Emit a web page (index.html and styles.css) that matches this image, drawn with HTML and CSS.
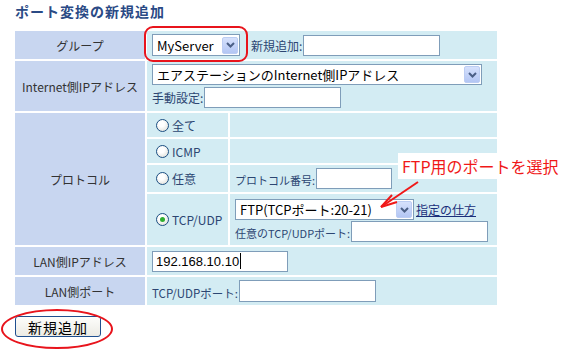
FILE: index.html
```html
<!DOCTYPE html>
<html lang="ja">
<head>
  <meta charset="UTF-8" />
  <title>ポート変換の新規追加</title>
  <link rel="stylesheet" href="styles.css">
</head>
<body>

<div class="page">
  <h1 class="title">ポート変換の新規追加</h1>

  <div class="form">
    <div class="label">グループ</div>
    <div class="cell wide">
      <div class="select sel-group">
        <span class="sel-text">MyServer</span>
        <span class="sel-btn"><svg width="9" height="6" viewBox="0 0 9 6"><path d="M1 1l3.5 3.5L8 1" fill="none" stroke="#4b5f86" stroke-width="2"/></svg></span>
      </div>
      <span class="hint gap-left">新規追加:</span>
      <input class="field w137" type="text">
    </div>

    <div class="label">Internet側IPアドレス</div>
    <div class="cell wide stack">
      <div class="select sel-wan">
        <span class="sel-text">エアステーションのInternet側IPアドレス</span>
        <span class="sel-btn"><svg width="9" height="6" viewBox="0 0 9 6"><path d="M1 1l3.5 3.5L8 1" fill="none" stroke="#4b5f86" stroke-width="2"/></svg></span>
      </div>
      <div class="line">
        <span class="hint">手動設定:</span>
        <input class="field w137" type="text">
      </div>
    </div>

    <div class="label proto">プロトコル</div>
    <div class="cell radio-cell"><span class="radio"></span><span class="opt">全て</span></div>
    <div class="cell"></div>
    <div class="cell radio-cell"><span class="radio"></span><span class="opt">ICMP</span></div>
    <div class="cell"></div>
    <div class="cell radio-cell"><span class="radio"></span><span class="opt">任意</span></div>
    <div class="cell sub">
      <span class="hint low small">プロトコル番号:</span>
      <input class="field w76" type="text">
    </div>
    <div class="cell radio-cell"><span class="radio checked"></span><span class="opt">TCP/UDP</span></div>
    <div class="cell sub stack">
      <div class="line">
        <div class="select sel-ftp">
          <span class="sel-text">FTP(TCPポート:20-21)</span>
          <span class="sel-btn"><svg width="9" height="6" viewBox="0 0 9 6"><path d="M1 1l3.5 3.5L8 1" fill="none" stroke="#4b5f86" stroke-width="2"/></svg></span>
        </div>
        <a class="howto" href="#">指定の仕方</a>
      </div>
      <div class="line">
        <span class="hint low small">任意のTCP/UDPポート:</span>
        <input class="field w137" type="text">
      </div>
    </div>

    <div class="label">LAN側IPアドレス</div>
    <div class="cell wide">
      <div class="field w136 ip">192.168.10.10<span class="caret"></span></div>
    </div>

    <div class="label">LAN側ポート</div>
    <div class="cell wide">
      <span class="hint low mid">TCP/UDPポート:</span>
      <input class="field w137 tall" type="text">
    </div>
  </div>

  <button class="add-btn">新規追加</button>

  <!-- annotations -->
  <div class="mark-box"></div>
  <div class="mark-ellipse"></div>
  <div class="note">FTP用のポートを選択</div>
  <svg class="arrow" width="60" height="40" viewBox="0 0 60 40">
    <path d="M48 2L11 27" stroke="#f01818" stroke-width="2" fill="none"/>
    <path d="M11 27L22 15M11 27L27 22" stroke="#f01818" stroke-width="2" fill="none"/>
  </svg>
</div>

</body>
</html>
```

FILE: styles.css
```css
* {
  box-sizing: border-box;
}

body {
  margin: 0;
  background: #fff;
  font-family: "Noto Sans CJK JP", "Liberation Sans", sans-serif;
  color: #333;
}

.page {
  position: relative;
  width: 570px;
  height: 350px;
  overflow: hidden;
}

.title {
  margin: 0;
  padding: 3px 0 0 15px;
  height: 31px;
  font-size: 14px;
  line-height: 16px;
  font-weight: bold;
  letter-spacing: 1px;
  color: #2a4a85;
}

.form {
  display: grid;
  grid-template-columns: 130px 81px 267px;
  grid-template-rows: 28px 50px 24px 24px 27px 51px 28px 28px;
  gap: 2px;
  margin-left: 15px;
}

.label {
  grid-column: 1;
  display: flex;
  align-items: center;
  justify-content: center;
  background: #c8d6f0;
  font-size: 12px;
  color: #333;
}

.label.proto {
  grid-row: 3 / span 4;
}

.cell {
  display: flex;
  align-items: center;
  background: #d3ecf3;
  padding-left: 5px;
}

.wide {
  grid-column: 2 / span 2;
}

.stack {
  flex-direction: column;
  align-items: flex-start;
  justify-content: center;
  gap: 2px;
}

.line {
  display: flex;
  align-items: center;
}

.hint {
  font-size: 12px;
  color: #2c4672;
  margin-right: 1px;
  white-space: nowrap;
}

.hint.small {
  font-size: 11px;
}

.hint.mid {
  font-size: 11.5px;
}

.hint.low {
  align-self: flex-end;
  margin-bottom: 4px;
}

.line .hint.low {
  align-self: auto;
  margin: 3px 1px 0 0;
}

.gap-left {
  margin-left: 11px;
}

.field {
  height: 21px;
  border: 1px solid #7f9db9;
  background: #fff;
  padding: 0 3px;
  font: 13px "Liberation Sans", sans-serif;
}

.w137 { width: 137px; }
.w136 { width: 136px; }
.w76 { width: 76px; }
.tall { height: 22px; }

.ip {
  display: flex;
  align-items: center;
  color: #000;
}

.caret {
  width: 1px;
  height: 16px;
  background: #000;
  margin-left: 1px;
}

.select {
  display: flex;
  align-items: center;
  height: 21px;
  border: 1px solid #7f9db9;
  background: #fff;
  padding-left: 4px;
  font-size: 13px;
  color: #000;
  white-space: nowrap;
  overflow: hidden;
}

.sel-text {
  flex: 1;
  overflow: hidden;
  line-height: 19px;
}

.sel-btn {
  display: flex;
  align-items: center;
  justify-content: center;
  width: 16px;
  height: 17px;
  margin-right: 1px;
  border: 1px solid #bccdf3;
  border-radius: 2px;
  background: linear-gradient(#d6e1fc, #b3c6f4);
}

.sel-group {
  width: 88px;
  height: 22px;
}

.sel-wan {
  width: 330px;
}

.sel-ftp {
  width: 179px;
}

.sub {
  padding-left: 5px;
}

.sub.stack {
  gap: 1px;
  padding-top: 2px;
}

.howto {
  margin-left: 2px;
  font-size: 12px;
  color: #1a2f7a;
  text-decoration: underline;
}

.radio-cell {
  grid-column: 2;
  padding-left: 9px;
}

.radio {
  width: 13px;
  height: 13px;
  border-radius: 50%;
  border: 1px solid #1c4f82;
  background: radial-gradient(circle at 40% 35%, #fff 30%, #d8d8d0 100%);
  position: relative;
}

.radio.checked::after {
  content: "";
  position: absolute;
  left: 3px;
  top: 3px;
  width: 5px;
  height: 5px;
  border-radius: 50%;
  background: #2fae2f;
}

.opt {
  margin-left: 3px;
  font-size: 12px;
  color: #2c4672;
}

.add-btn {
  display: block;
  margin: 11px 0 0 15px;
  width: 86px;
  height: 21px;
  padding: 0;
  border: 1px solid #1f4f8f;
  border-radius: 3px;
  background: linear-gradient(#fdfdfb, #ecebe4);
  font-family: "Noto Sans CJK JP", sans-serif;
  font-size: 14px;
  letter-spacing: 1px;
  line-height: 18px;
  color: #000;
}

.mark-box {
  position: absolute;
  left: 144px;
  top: 26px;
  width: 104px;
  height: 36px;
  border: 2px solid #e8141c;
  border-radius: 9px;
}

.mark-ellipse {
  position: absolute;
  left: 1px;
  top: 309px;
  width: 112px;
  height: 40px;
  border: 2px solid #e8141c;
  border-radius: 50%;
}

.note {
  position: absolute;
  left: 398px;
  top: 153px;
  width: 165px;
  height: 26px;
  padding: 3px 0 0 4px;
  background: #fff;
  font-size: 16px;
  line-height: 20px;
  color: #f01818;
  white-space: nowrap;
}

.arrow {
  position: absolute;
  left: 370px;
  top: 180px;
}
```
